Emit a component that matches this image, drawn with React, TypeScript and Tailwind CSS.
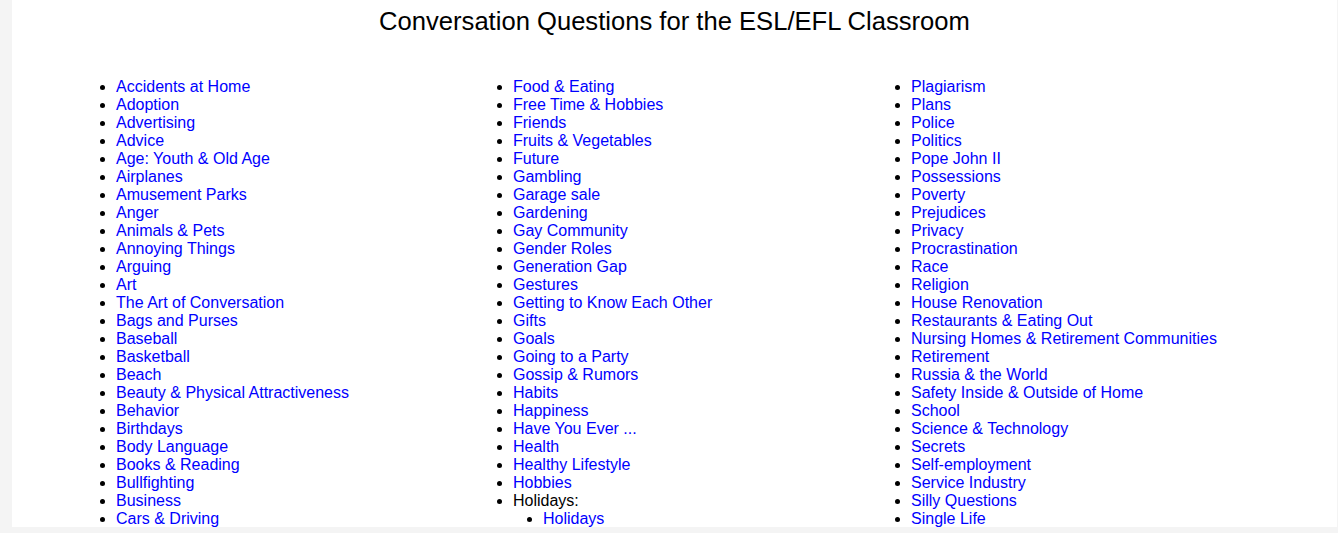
import React from 'react';

type Item = string | { label: string; children: string[] };

const columns: Item[][] = [
  [
    'Accidents at Home',
    'Adoption',
    'Advertising',
    'Advice',
    'Age: Youth & Old Age',
    'Airplanes',
    'Amusement Parks',
    'Anger',
    'Animals & Pets',
    'Annoying Things',
    'Arguing',
    'Art',
    'The Art of Conversation',
    'Bags and Purses',
    'Baseball',
    'Basketball',
    'Beach',
    'Beauty & Physical Attractiveness',
    'Behavior',
    'Birthdays',
    'Body Language',
    'Books & Reading',
    'Bullfighting',
    'Business',
    'Cars & Driving'
  ],
  [
    'Food & Eating',
    'Free Time & Hobbies',
    'Friends',
    'Fruits & Vegetables',
    'Future',
    'Gambling',
    'Garage sale',
    'Gardening',
    'Gay Community',
    'Gender Roles',
    'Generation Gap',
    'Gestures',
    'Getting to Know Each Other',
    'Gifts',
    'Goals',
    'Going to a Party',
    'Gossip & Rumors',
    'Habits',
    'Happiness',
    'Have You Ever ...',
    'Health',
    'Healthy Lifestyle',
    'Hobbies',
    { label: 'Holidays:', children: ['Holidays'] }
  ],
  [
    'Plagiarism',
    'Plans',
    'Police',
    'Politics',
    'Pope John II',
    'Possessions',
    'Poverty',
    'Prejudices',
    'Privacy',
    'Procrastination',
    'Race',
    'Religion',
    'House Renovation',
    'Restaurants & Eating Out',
    'Nursing Homes & Retirement Communities',
    'Retirement',
    'Russia & the World',
    'Safety Inside & Outside of Home',
    'School',
    'Science & Technology',
    'Secrets',
    'Self-employment',
    'Service Industry',
    'Silly Questions',
    'Single Life'
  ]
];

const TopicLink: React.FC<{ label: string }> = ({ label }) => (
  <a href="#" className="text-[#0000ff]">
    {label}
  </a>
);

const App: React.FC = () => {
  return (
    <div className="h-[533px] w-[1338px] bg-[#f4f4f4] font-['Liberation_Sans',Arial,sans-serif] text-[16px] leading-[18px] text-black">
      <div className="h-[527px] w-[1325px] ml-[12px] bg-white overflow-hidden">
        <h1 className="pt-[7px] text-center text-[25.6px] leading-[28px] font-normal">
          Conversation Questions for the ESL/EFL Classroom
        </h1>
        <div className="mt-[43px] pl-[64px] grid grid-cols-[397px_398px_398px]">
          {columns.map((col, i) => (
            <ul key={i} className="list-disc pl-[40px]">
              {col.map((item) =>
                typeof item === 'string' ? (
                  <li key={item}>
                    <TopicLink label={item} />
                  </li>
                ) : (
                  <li key={item.label}>
                    {item.label}
                    <ul className="list-disc pl-[30px]">
                      {item.children.map((c) => (
                        <li key={c}>
                          <TopicLink label={c} />
                        </li>
                      ))}
                    </ul>
                  </li>
                )
              )}
            </ul>
          ))}
        </div>
      </div>
    </div>
  );
};

export default App;
